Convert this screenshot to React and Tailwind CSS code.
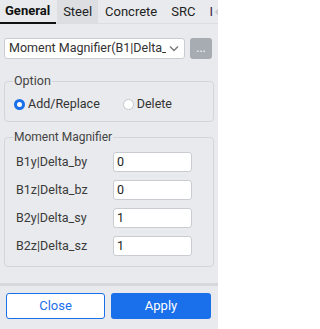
import React from "react";

function Radio({ checked, label, className = "" }) {
  return (
    <label className={"flex items-center gap-[3px] " + className}>
      {checked ? (
        <span className="w-[11px] h-[11px] rounded-full border-[3px] border-[#1a6fea] bg-white box-border" />
      ) : (
        <span className="w-[11px] h-[11px] rounded-full border border-[#c4c7cc] bg-white box-border" />
      )}
      <span className="text-[#333] text-[12.5px] leading-[16px]">{label}</span>
    </label>
  );
}

function Row({ label, value }) {
  return (
    <div className="flex items-center h-[20px]">
      <span className="pl-[3px] w-[100px] text-[#3a3a3a] text-[12.5px]">{label}</span>
      <div className="w-[79px] h-[20px] bg-white border border-[#c9ccd1] rounded-[3px] flex items-center pl-[3px] text-[12.5px] text-[#222]">
        {value}
      </div>
    </div>
  );
}

export default function App() {
  return (
    <div
      className="w-[218px] h-[329px] bg-[#e9eaed] flex flex-col overflow-hidden"
      style={{ fontFamily: "Roboto, 'Noto Sans', sans-serif" }}
    >
      <div className="relative flex h-[24px] border-b border-[#dcdde1] text-[13px] text-[#222] shrink-0">
        <div className="pl-[5px] pr-[6px] flex items-center font-bold text-[#111] border-b-2 border-[#111] -mb-px">
          General
        </div>
        <div className="px-[6px] flex items-center bg-[#dcdee2] ml-[1px]">Steel</div>
        <div className="px-[7px] flex items-center">Concrete</div>
        <div className="px-[7px] flex items-center">SRC</div>
        <div className="pl-[7px] flex items-center text-[#3b1f4a]">I</div>
        <svg className="absolute right-[-3px] top-[7px]" width="7" height="10" viewBox="0 0 7 10">
          <path d="M6 1 L2 5 L6 9" fill="none" stroke="#c2c4c8" strokeWidth="1.5" />
        </svg>
      </div>

      <div className="px-[4px] pt-[14px] flex flex-col">
        <div className="flex items-center gap-[5px]">
          <div className="w-[181px] h-[21px] bg-white border border-[#c9ccd1] rounded-[3px] flex items-center pl-[4px] pr-[5px] text-[12.5px] text-[#333]">
            <span className="flex-1 overflow-hidden whitespace-nowrap">Moment Magnifier(B1|Delta_by</span>
            <svg width="10" height="7" viewBox="0 0 10 7" className="ml-[3px] shrink-0">
              <path d="M1 1.5 L5 5.5 L9 1.5" fill="none" stroke="#777" strokeWidth="1.4" />
            </svg>
          </div>
          <div className="w-[22px] h-[21px] rounded-[3px] bg-[#a7abb2] flex items-center justify-center text-white text-[12px] leading-none pb-[2px]">
            ...
          </div>
        </div>

        <fieldset className="mt-[15px] border border-[#d3d5da] rounded-[4px] px-[8px] pt-[8px] pb-[9px]">
          <legend className="px-[1px] text-[12.5px] leading-[14px] text-[#444]">Option</legend>
          <div className="flex items-center h-[16px] pl-[1px]">
            <Radio checked label="Add/Replace" />
            <Radio label="Delete" className="ml-[23px]" />
          </div>
        </fieldset>

        <fieldset className="mt-[8px] border border-[#d3d5da] rounded-[4px] px-[8px] pt-[8px] pb-[10px]">
          <legend className="px-[1px] text-[12px] leading-[14px] text-[#444]">Moment Magnifier</legend>
          <div className="flex flex-col gap-[8px]">
            <Row label="B1y|Delta_by" value="0" />
            <Row label="B1z|Delta_bz" value="0" />
            <Row label="B2y|Delta_sy" value="1" />
            <Row label="B2z|Delta_sz" value="1" />
          </div>
        </fieldset>
      </div>

      <div className="mt-auto">
        <div className="h-[3px] bg-[#d7d8dc]" />
        <div className="flex gap-[6px] px-[6px] pt-[7px] pb-[10px]">
          <button className="w-[99px] h-[26px] bg-white border border-[#1a6fea] rounded-[3px] text-[#1a6fea] text-[13px]">
            Close
          </button>
          <button className="w-[100px] h-[26px] bg-[#1a6fea] rounded-[3px] text-white text-[13px]">
            Apply
          </button>
        </div>
      </div>
    </div>
  );
}
